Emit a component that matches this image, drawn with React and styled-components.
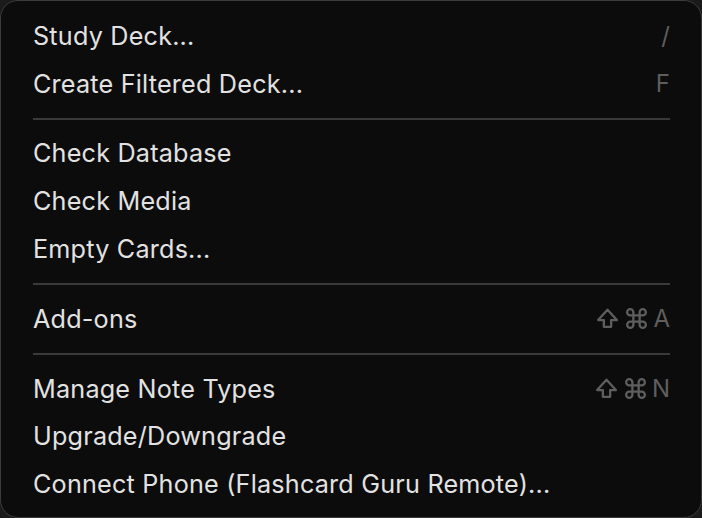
import React from "react";
import styled, { createGlobalStyle } from "styled-components";

const GlobalStyle = createGlobalStyle`
  html, body {
    margin: 0;
    padding: 0;
    background: #1b1b1b;
  }
  body {
    font-family: Inter, "Liberation Sans", sans-serif;
    -webkit-font-smoothing: antialiased;
  }
`;

const Menu = styled.div`
  box-sizing: border-box;
  width: 702px;
  height: 518px;
  background: #0c0c0c;
  border: 1.5px solid #3c3c3c;
  border-radius: 18px;
  padding: 11px 31px 9px 32px;
  display: flex;
  flex-direction: column;
`;

const Row = styled.div`
  height: 48px;
  display: flex;
  align-items: center;
  justify-content: space-between;
  font-size: 25.2px;
  letter-spacing: 0.2px;
  color: #e2e2e2;
`;

const Shortcut = styled.span`
  display: flex;
  align-items: center;
  gap: 4px;
  color: #5e5e5e;
  font-size: 24px;
  letter-spacing: 0;
`;

const Separator = styled.div`
  height: 22px;
  display: flex;
  align-items: center;

  &::after {
    content: "";
    flex: 1;
    height: 2px;
    background: #3a3a3a;
  }
`;

const Glyph = styled.svg`
  width: 25px;
  height: 25px;
  fill: none;
  stroke: #5e5e5e;
  stroke-width: 2.2;
  stroke-linecap: round;
  stroke-linejoin: round;
`;

const Shift = () => (
  <Glyph viewBox="0 0 24 24">
    <path d="M8.5 20v-6.5H3L12 3.5l9 10h-5.5V20h-7z" />
  </Glyph>
);

const Cmd = () => (
  <Glyph viewBox="0 0 24 24">
    <path d="M15 6v12a3 3 0 1 0 3-3H6a3 3 0 1 0 3 3V6a3 3 0 1 0-3 3h12a3 3 0 1 0-3-3" />
  </Glyph>
);

const sections = [
  [
    { label: "Study Deck...", keys: "/" },
    { label: "Create Filtered Deck...", keys: "F" },
  ],
  [
    { label: "Check Database" },
    { label: "Check Media" },
    { label: "Empty Cards..." },
  ],
  [{ label: "Add-ons", keys: "A", mods: true }],
  [
    { label: "Manage Note Types", keys: "N", mods: true },
    { label: "Upgrade/Downgrade" },
    { label: "Connect Phone (Flashcard Guru Remote)..." },
  ],
];

export default function App() {
  return (
    <>
      <GlobalStyle />
      <Menu>
        {sections.map((items, i) => (
          <React.Fragment key={i}>
            {i > 0 && <Separator />}
            {items.map((item) => (
              <Row key={item.label}>
                <span>{item.label}</span>
                {item.keys && (
                  <Shortcut>
                    {item.mods && (
                      <>
                        <Shift />
                        <Cmd />
                      </>
                    )}
                    {item.keys}
                  </Shortcut>
                )}
              </Row>
            ))}
          </React.Fragment>
        ))}
      </Menu>
    </>
  );
}
